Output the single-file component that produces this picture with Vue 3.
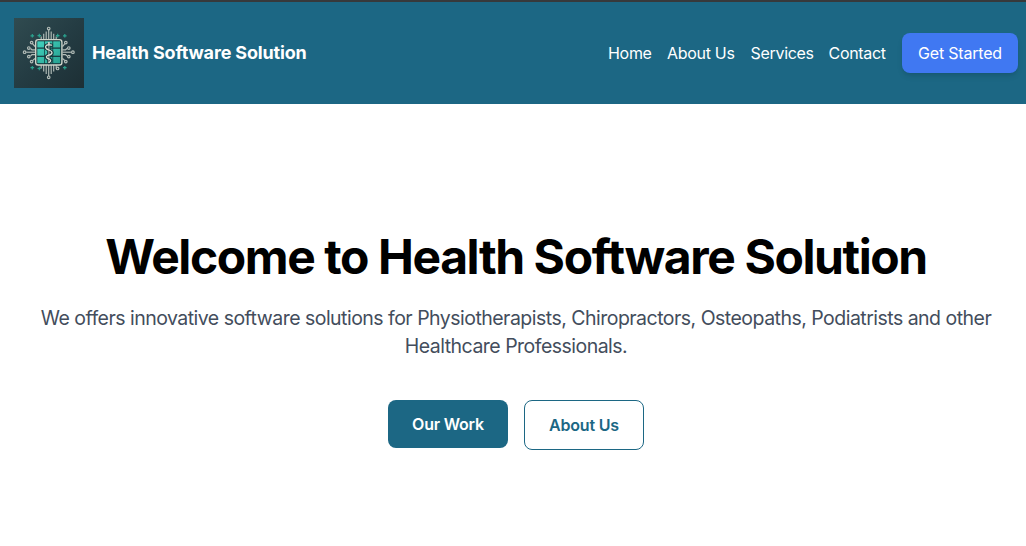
<script setup>
const links = [
  { label: 'Home', cls: 'home' },
  { label: 'About Us', cls: 'about' },
  { label: 'Services', cls: 'services' },
  { label: 'Contact', cls: 'contact' },
]

// Circuit traces around the chip; the outer ones end in small rings.
const traces = [
  'M34.7 21V11.8', 'M32.2 21V13.6', 'M37.2 21V13.6', 'M29.7 21V15.8', 'M39.7 21V15.8', 'M27.2 21V18.6', 'M42.2 21V18.6',
  'M34.7 47V58', 'M32.2 47V56', 'M37.2 47V56', 'M29.7 47V53.5', 'M39.7 47V53.5', 'M27.2 47V50.5', 'M42.2 47V50.5',
  'M21 34.2H12.2', 'M21 31.8H18L16.5 30.5', 'M21 36.6H18L16.5 38', 'M21 28.5L18.5 25.7', 'M21 40.5L18.5 42.6',
  'M48.5 34.2H57.3', 'M48.5 31.8H51.5L53 30.5', 'M48.5 36.6H51.5L53 38', 'M48.5 28.5L51 25.7', 'M48.5 40.5L51 42.6',
]
const rings = [
  [34.7, 10.5], [34.7, 59.3], [10.6, 34.2], [58.9, 34.2],
  [14.8, 30], [14.8, 38.6], [54.8, 30], [54.8, 38.6],
  [17.6, 24.6], [17.6, 43.6], [51.8, 24.6], [51.8, 43.6],
  [43.6, 50.4],
]
const pluses = [
  [18.3, 17.8], [25.3, 17.6], [43.7, 17.6], [50.8, 17.8],
  [18.3, 49.7], [25.3, 50.5], [50.8, 49.7],
]
</script>

<template>
  <div class="page">
    <header class="bar">
      <div class="brand">
        <svg class="logo" viewBox="0 0 70 70" aria-hidden="true">
          <defs>
            <linearGradient id="slate" x1="0" y1="0" x2="1" y2="1">
              <stop offset="0" stop-color="#304b50" />
              <stop offset=".5" stop-color="#243c43" />
              <stop offset="1" stop-color="#1d2f35" />
            </linearGradient>
            <linearGradient id="teal" gradientUnits="userSpaceOnUse" x1="23" y1="23" x2="47" y2="46">
              <stop offset="0" stop-color="#43d3bf" />
              <stop offset="1" stop-color="#26a090" />
            </linearGradient>
          </defs>
          <rect width="70" height="70" fill="url(#slate)" />
          <g fill="none" stroke="#b3bdb8" stroke-width="1.15">
            <path v-for="d in traces" :key="d" :d="d" />
            <circle v-for="(r, i) in rings" :key="i" :cx="r[0]" :cy="r[1]" r="1.3" />
          </g>
          <path
            v-for="(p, i) in pluses" :key="'p' + i"
            :d="`M${p[0] - 1.8} ${p[1]}h3.6M${p[0]} ${p[1] - 1.8}v3.6`"
            stroke="#2aa28e" stroke-width="1.2"
          />
          <rect x="21.7" y="21.6" width="26.2" height="25.4" rx="2.6" fill="#153238" stroke="#ced5cb" stroke-width="1.4" />
          <g fill="url(#teal)">
            <rect x="23.3" y="23.3" width="7" height="6.2" />
            <rect x="31" y="23.3" width="7.4" height="6.2" />
            <rect x="39.2" y="23.3" width="7" height="6.2" />
            <rect x="23.3" y="30.7" width="7" height="7" />
            <rect x="31" y="30.7" width="7.4" height="7" />
            <rect x="39.2" y="30.7" width="7" height="7" />
            <rect x="23.3" y="38.9" width="7" height="6.3" />
            <rect x="31" y="38.9" width="7.4" height="6.3" />
            <rect x="39.2" y="38.9" width="7" height="6.3" />
          </g>
          <g fill="none" stroke-linecap="round">
            <path d="M34.9 26V44M37.5 27.2C31 25.5 29.5 30.2 34.8 32C39.5 33.6 38.6 36.3 34.8 37.2C31.2 38.2 32 40.3 35 41C37.5 41.8 37 43.5 35 44.5" stroke="#153238" stroke-width="3.4" />
            <path d="M34.9 26V44.5" stroke="#d8ded4" stroke-width=".8" />
            <path d="M37.6 27.2C31 25.5 29.5 30.2 34.8 32C39.5 33.6 38.6 36.3 34.8 37.2C31.2 38.2 32 40.3 35 41C37.5 41.8 37 43.5 35 44.5" stroke="#d8ded4" stroke-width="1.3" />
          </g>
          <circle cx="34.9" cy="25" r="1.1" fill="#d8ded4" />
        </svg>
        <span class="name">Health Software Solution</span>
      </div>
      <nav class="nav">
        <a v-for="l in links" :key="l.label" class="link" :class="l.cls">{{ l.label }}</a>
        <button class="start">Get Started</button>
      </nav>
    </header>

    <main class="hero">
      <h1 class="title">Welcome to Health Software Solution</h1>
      <p class="lead">
        We offers innovative software solutions for Physiotherapists, Chiropractors, Osteopaths, Podiatrists and other
        <br>Healthcare Professionals.
      </p>
      <div class="actions">
        <button class="btn solid">Our Work</button>
        <button class="btn outline">About Us</button>
      </div>
    </main>
  </div>
</template>

<style>
body {
  background: #fff;
  overflow: hidden;
}
</style>

<style scoped>
.page {
  height: 546px;
  font-family: Inter, "Liberation Sans", sans-serif;
  background: #fff;
}
.bar {
  box-sizing: border-box;
  height: 104px;
  border-top: 2px solid #37393b;
  background: #1c6784;
  padding: 0 8px 0 14px;
  display: flex;
  justify-content: space-between;
  align-items: center;
  color: #fff;
}
.brand {
  display: flex;
  align-items: center;
  gap: 8px;
}
.logo {
  display: block;
  width: 70px;
  height: 70px;
}
.name {
  font-size: 18px;
  line-height: 28px;
  font-weight: 700;
  letter-spacing: -0.16px;
  white-space: nowrap;
}
.nav {
  display: flex;
  align-items: center;
  gap: 16px;
}
.link,
.start {
  font-size: 16px;
  line-height: 24px;
  letter-spacing: -0.3px;
  white-space: nowrap;
}
.link {
  box-sizing: border-box;
}
.home { width: 43px; }
.about { width: 67.5px; }
.services { width: 62px; }
.contact { width: 57.5px; }
button {
  box-sizing: border-box;
  font-family: inherit;
  margin: 0;
  padding: 0;
  border: 0;
  border-radius: 8px;
}
.start {
  width: 116px;
  height: 40px;
  color: #fff;
  background: #4078f2;
  letter-spacing: -0.2px;
  box-shadow: 0 4px 6px -1px rgb(0 0 0 / 0.1), 0 2px 4px -2px rgb(0 0 0 / 0.1);
}
.hero {
  padding: 129px 0 0 6px;
  text-align: center;
}
.title {
  margin: 0;
  font-size: 48px;
  line-height: 48px;
  font-weight: 700;
  letter-spacing: -1.41px;
  color: #000;
  white-space: nowrap;
}
.lead {
  margin: 23px 0 0;
  font-size: 19.5px;
  line-height: 28px;
  letter-spacing: -0.52px;
  color: #434d5c;
  white-space: nowrap;
}
.actions {
  margin-top: 40px;
  display: flex;
  justify-content: center;
  align-items: flex-start;
  gap: 16px;
}
.btn {
  width: 120px;
  height: 48px;
  font-size: 16px;
  line-height: 24px;
  font-weight: 600;
  letter-spacing: -0.2px;
}
.solid {
  color: #fff;
  background: #1c6784;
}
.outline {
  height: 50px;
  color: #1c6784;
  background: #fff;
  border: 1px solid #1c6784;
}
</style>
